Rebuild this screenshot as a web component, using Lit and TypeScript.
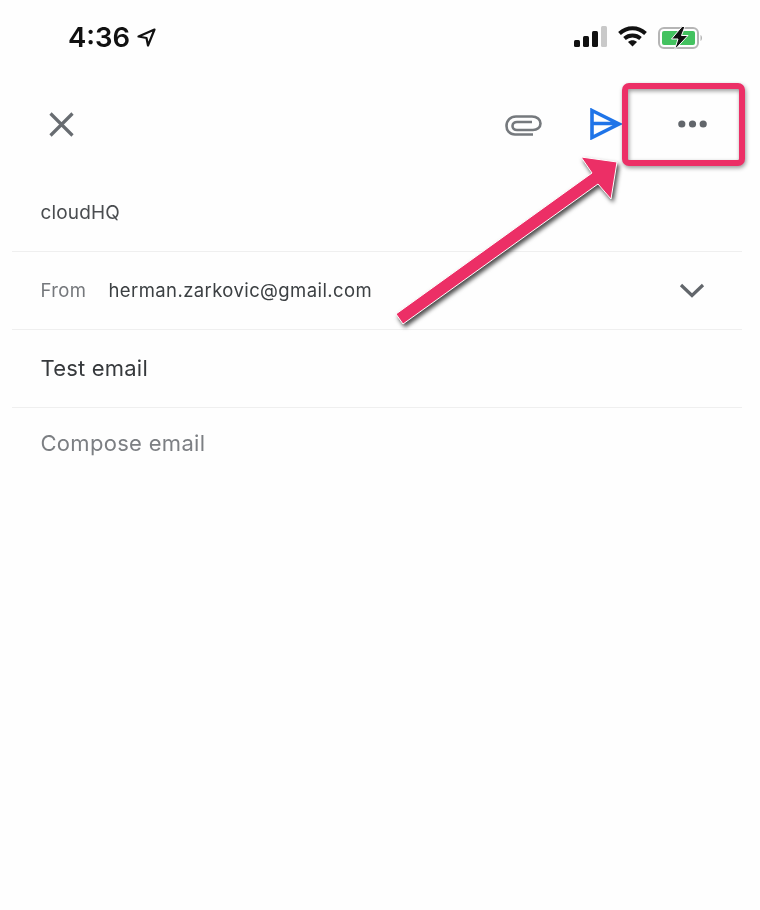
import { LitElement, html, css, svg } from 'lit';
import { customElement } from 'lit/decorators.js';

@customElement('app-root')
export class AppRoot extends LitElement {
  static styles = css`
    :host {
      display: block;
      position: relative;
      width: 760px;
      height: 910px;
      overflow: hidden;
      background: #fefefe;
      font-family: Inter, 'Noto Sans', sans-serif;
      color: #3c4043;
      filter: blur(0.4px);
    }
    svg { display: block; flex: none; }
    .status {
      height: 76px;
      display: flex;
      align-items: flex-start;
      padding: 24px 56px 0 68px;
      box-sizing: border-box;
    }
    .time {
      font-size: 27.5px;
      font-weight: 600;
      line-height: 27px;
      color: #111;
    }
    .location { margin: 4px 0 0 7px; }
    .indicators {
      margin-left: auto;
      display: flex;
      align-items: flex-start;
      gap: 11px;
      padding-top: 2px;
    }
    .toolbar {
      height: 96px;
      display: flex;
      align-items: center;
      padding: 0 53px 0 49px;
    }
    .actions {
      margin-left: auto;
      display: flex;
      align-items: center;
    }
    .clip { margin: 2px 48px 0 0; }
    .send { margin-right: 56px; }
    .rows { margin: 0 18px 0 12px; }
    .row {
      height: 75px;
      padding: 0 37px 2px 28.5px;
      display: flex;
      align-items: center;
      border-bottom: 1px solid #efefef;
    }
    .row.to {
      height: 77px;
      padding-top: 2px;
      padding-bottom: 0;
      font-size: 19px;
      letter-spacing: 0.15px;
      color: #4a4d50;
    }
    .row.from { font-size: 18.5px; letter-spacing: 0.4px; }
    .label { color: #75787c; width: 68px; }
    .address { color: #3c4043; }
    .chevron { margin: 2px 0 0 auto; }
    .row.subject { font-size: 22px; letter-spacing: 0.2px; color: #36393c; }
    .compose {
      padding: 20px 0 0 40.5px;
      font-size: 22px;
      letter-spacing: 0.3px;
      line-height: 30px;
      color: #7c7f83;
    }
    .overlay {
      position: absolute;
      left: 0;
      top: 0;
      pointer-events: none;
    }
    .arrow { filter: drop-shadow(2px 3px 2px rgba(0, 0, 0, 0.7)); }
    .frame { filter: drop-shadow(1px 2px 2px rgba(0, 0, 0, 0.4)); }
  `;

  private renderIndicators() {
    return html`
      <div class="indicators">
        <svg width="33" height="22" viewBox="0 0 33 22">
          <rect x="0" y="14" width="6" height="7" rx="1.5" fill="#111" />
          <rect x="9" y="10" width="6" height="11" rx="1.5" fill="#111" />
          <rect x="18" y="5" width="6" height="16" rx="1.5" fill="#111" />
          <rect x="27" y="0" width="6" height="21" rx="1.5" fill="#c9c9c9" />
        </svg>
        <svg width="29" height="21" viewBox="0 0 29 21">
          <path d="M1.5 7.5 C9 0.5 20 0.5 27.5 7.5" fill="none" stroke="#111" stroke-width="4" />
          <path d="M6.5 12.5 C11 8.5 18 8.5 22.5 12.5" fill="none" stroke="#111" stroke-width="3.8" />
          <path d="M10 16 L14.5 20.5 L19 16 C16.5 13.8 12.5 13.8 10 16 Z" fill="#111" />
        </svg>
        <svg width="46" height="26" viewBox="0 0 46 26">
          <rect x="1" y="2" width="39" height="20" rx="5" fill="none" stroke="#b5b5b5" stroke-width="2" />
          <rect x="4" y="5" width="33" height="14" rx="2" fill="#43c25f" />
          <path d="M42.5 9 C44.5 10 44.5 14 42.5 15 Z" fill="#b5b5b5" />
          <path d="M24 0.5 L13.5 13 L20 13 L16.5 24 L30 9.5 L23.5 9.5 L27 0.5 Z" fill="#111" stroke="#fefefe" stroke-width="1" />
        </svg>
      </div>
    `;
  }

  private renderOverlay() {
    return html`
      <svg class="overlay" width="760" height="910" viewBox="0 0 760 910">
        <rect class="frame" x="625" y="86" width="117" height="77" rx="4" fill="none" stroke="#ec2f66" stroke-width="6" />
        ${svg`<polygon class="arrow"
          points="617,162 581,157 592,173 396,314 403,324 598,184 611,199"
          fill="#ec2f66" stroke="#fff" stroke-width="1" />`}
      </svg>
    `;
  }

  render() {
    return html`
      <div class="status">
        <span class="time">4:36</span>
        <svg class="location" width="19" height="19" viewBox="0 0 19 19">
          <path d="M17.5 1.5 L1.5 8.5 L9.5 10 L11 17.5 Z" fill="none" stroke="#111" stroke-width="2.2" stroke-linejoin="round" />
        </svg>
        ${this.renderIndicators()}
      </div>

      <div class="toolbar">
        <svg width="25" height="25" viewBox="0 0 25 25">
          <path d="M1.5 1.5 L23.5 23.5 M23.5 1.5 L1.5 23.5" stroke="#686c71" stroke-width="3.2" fill="none" />
        </svg>
        <div class="actions">
          <svg class="clip" width="37" height="21" viewBox="0 0 37 21">
            <path d="M28 19.5 L10 19.5 C4.5 19.5 1.5 15.5 1.5 11 C1.5 5.5 5.5 1.5 11 1.5 L27 1.5 C32 1.5 35.5 4.5 35.5 8.5 C35.5 12.5 32 15 28 15 L12 15 C9.5 15 7.5 13.5 7.5 11 C7.5 8.5 9.5 7 12 7 L27 7"
              fill="none" stroke="#75797d" stroke-width="2.6" />
          </svg>
          <svg class="send" width="32" height="32" viewBox="0 0 32 32">
            <path d="M2 2.5 L29 16 L2 29.5 Z M2 15.5 L27 15.5" fill="none" stroke="#1f74e8" stroke-width="3.6" stroke-linejoin="miter" />
          </svg>
          <svg width="29" height="8" viewBox="0 0 29 8">
            <circle cx="3.8" cy="4" r="3.6" fill="#62666b" />
            <circle cx="14.5" cy="4" r="3.6" fill="#62666b" />
            <circle cx="25.2" cy="4" r="3.6" fill="#62666b" />
          </svg>
        </div>
      </div>

      <div class="rows">
        <div class="row to">cloudHQ</div>
        <div class="row from">
          <span class="label">From</span>
          <span class="address">herman.zarkovic@gmail.com</span>
          <svg class="chevron" width="26" height="15" viewBox="0 0 26 15">
            <path d="M2 2 L13 12.5 L24 2" fill="none" stroke="#62666b" stroke-width="3.2" />
          </svg>
        </div>
        <div class="row subject">Test email</div>
      </div>
      <div class="compose">Compose email</div>

      ${this.renderOverlay()}
    `;
  }
}
